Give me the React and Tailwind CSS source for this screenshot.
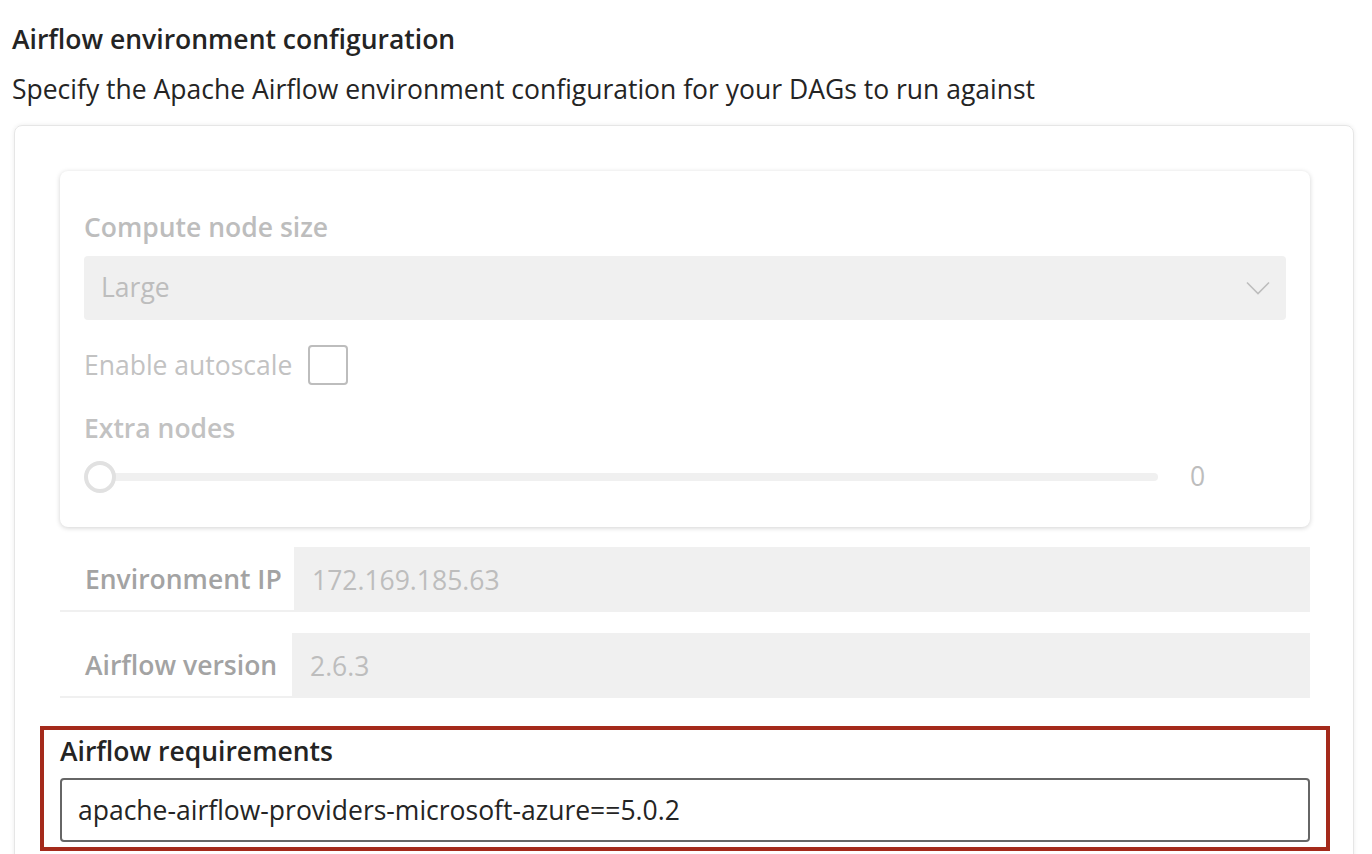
import React from "react";

const Field = ({ label, value, labelW }) => (
  <div className="flex h-[65px]">
    <div
      className={`${labelW} flex items-center pt-[2px] pl-[25px] border-b-2 border-[#f0f0f0] text-[26.5px] font-semibold text-[#a3a3a3]`}
    >
      {label}
    </div>
    <div className="flex-1 flex items-center pt-[2px] pl-[18px] bg-[#f0f0f0] text-[26.5px] text-[#bdbdbd]">
      {value}
    </div>
  </div>
);

const App = () => {
  return (
    <div
      className="w-[1372px] h-[854px] overflow-hidden bg-white text-[#242424]"
      style={{ fontFamily: "'Open Sans', 'Noto Sans', sans-serif" }}
    >
      <div className="pl-[12px] pt-[22px]">
        <h1 className="text-[26.5px] font-semibold leading-[34px]">
          Airflow environment configuration
        </h1>
        <p className="mt-[16px] text-[26.5px] leading-[34px]">
          Specify the Apache Airflow environment configuration for your DAGs to run against
        </p>
      </div>

      <div className="ml-[14px] mt-[19px] w-[1340px] h-[800px] rounded-lg border border-[#e6e6e6] shadow-[0_0_4px_rgba(0,0,0,0.08)] pt-[45px] pl-[45px]">
        <div className="w-[1250px] h-[356px] rounded-lg bg-white shadow-[0_1px_5px_rgba(0,0,0,0.18)] px-[24px] pt-[39px]">
          <div className="text-[26.5px] font-semibold text-[#bdbdbd] leading-[34px]">
            Compute node size
          </div>
          <div className="mt-[12px] h-[64px] rounded bg-[#f0f0f0] flex items-center justify-between pl-[17px] pr-[16px]">
            <span className="text-[26.5px] text-[#bdbdbd]">Large</span>
            <svg width="24" height="14" viewBox="0 0 24 14" fill="none">
              <path d="M1 1.5 L12 12.5 L23 1.5" stroke="#bdbdbd" strokeWidth="1.6" />
            </svg>
          </div>
          <div className="mt-[25px] flex items-center gap-[16px]">
            <span className="text-[26.5px] text-[#c2c2c2] leading-[34px]">Enable autoscale</span>
            <div className="w-[40px] h-[40px] rounded border-2 border-[#bdbdbd]" />
          </div>
          <div className="mt-[26px] text-[26.5px] font-semibold text-[#c2c2c2] leading-[34px]">
            Extra nodes
          </div>
          <div className="mt-[12px] flex items-center">
            <div className="relative w-[1074px] h-[32px] flex items-center">
              <div className="ml-[16px] flex-1 h-[8px] rounded-full bg-[#f0f0f0]" />
              <div className="absolute left-0 top-0 w-[32px] h-[32px] rounded-full border-4 border-[#e1e1e1] bg-white" />
            </div>
            <span className="ml-[32px] text-[26.5px] text-[#bdbdbd]">0</span>
          </div>
        </div>

        <div className="w-[1250px] mt-[20px] flex flex-col gap-[21px]">
          <Field label="Environment IP" value="172.169.185.63" labelW="w-[234px]" />
          <Field label="Airflow version" value="2.6.3" labelW="w-[232px]" />
        </div>

        <div className="-ml-[20px] mt-[28px] w-[1290px] border-4 border-[#a42a1b] pl-[16px] pr-[16px] pt-[4px] pb-[5px]">
          <div className="text-[26.5px] font-semibold leading-[34px]">Airflow requirements</div>
          <div className="mt-[10px] h-[64px] rounded border-2 border-[#666666] flex items-center pt-[2px] pl-[16px] text-[26.5px]">
            apache-airflow-providers-microsoft-azure==5.0.2
          </div>
        </div>
      </div>
    </div>
  );
};

export default App;
